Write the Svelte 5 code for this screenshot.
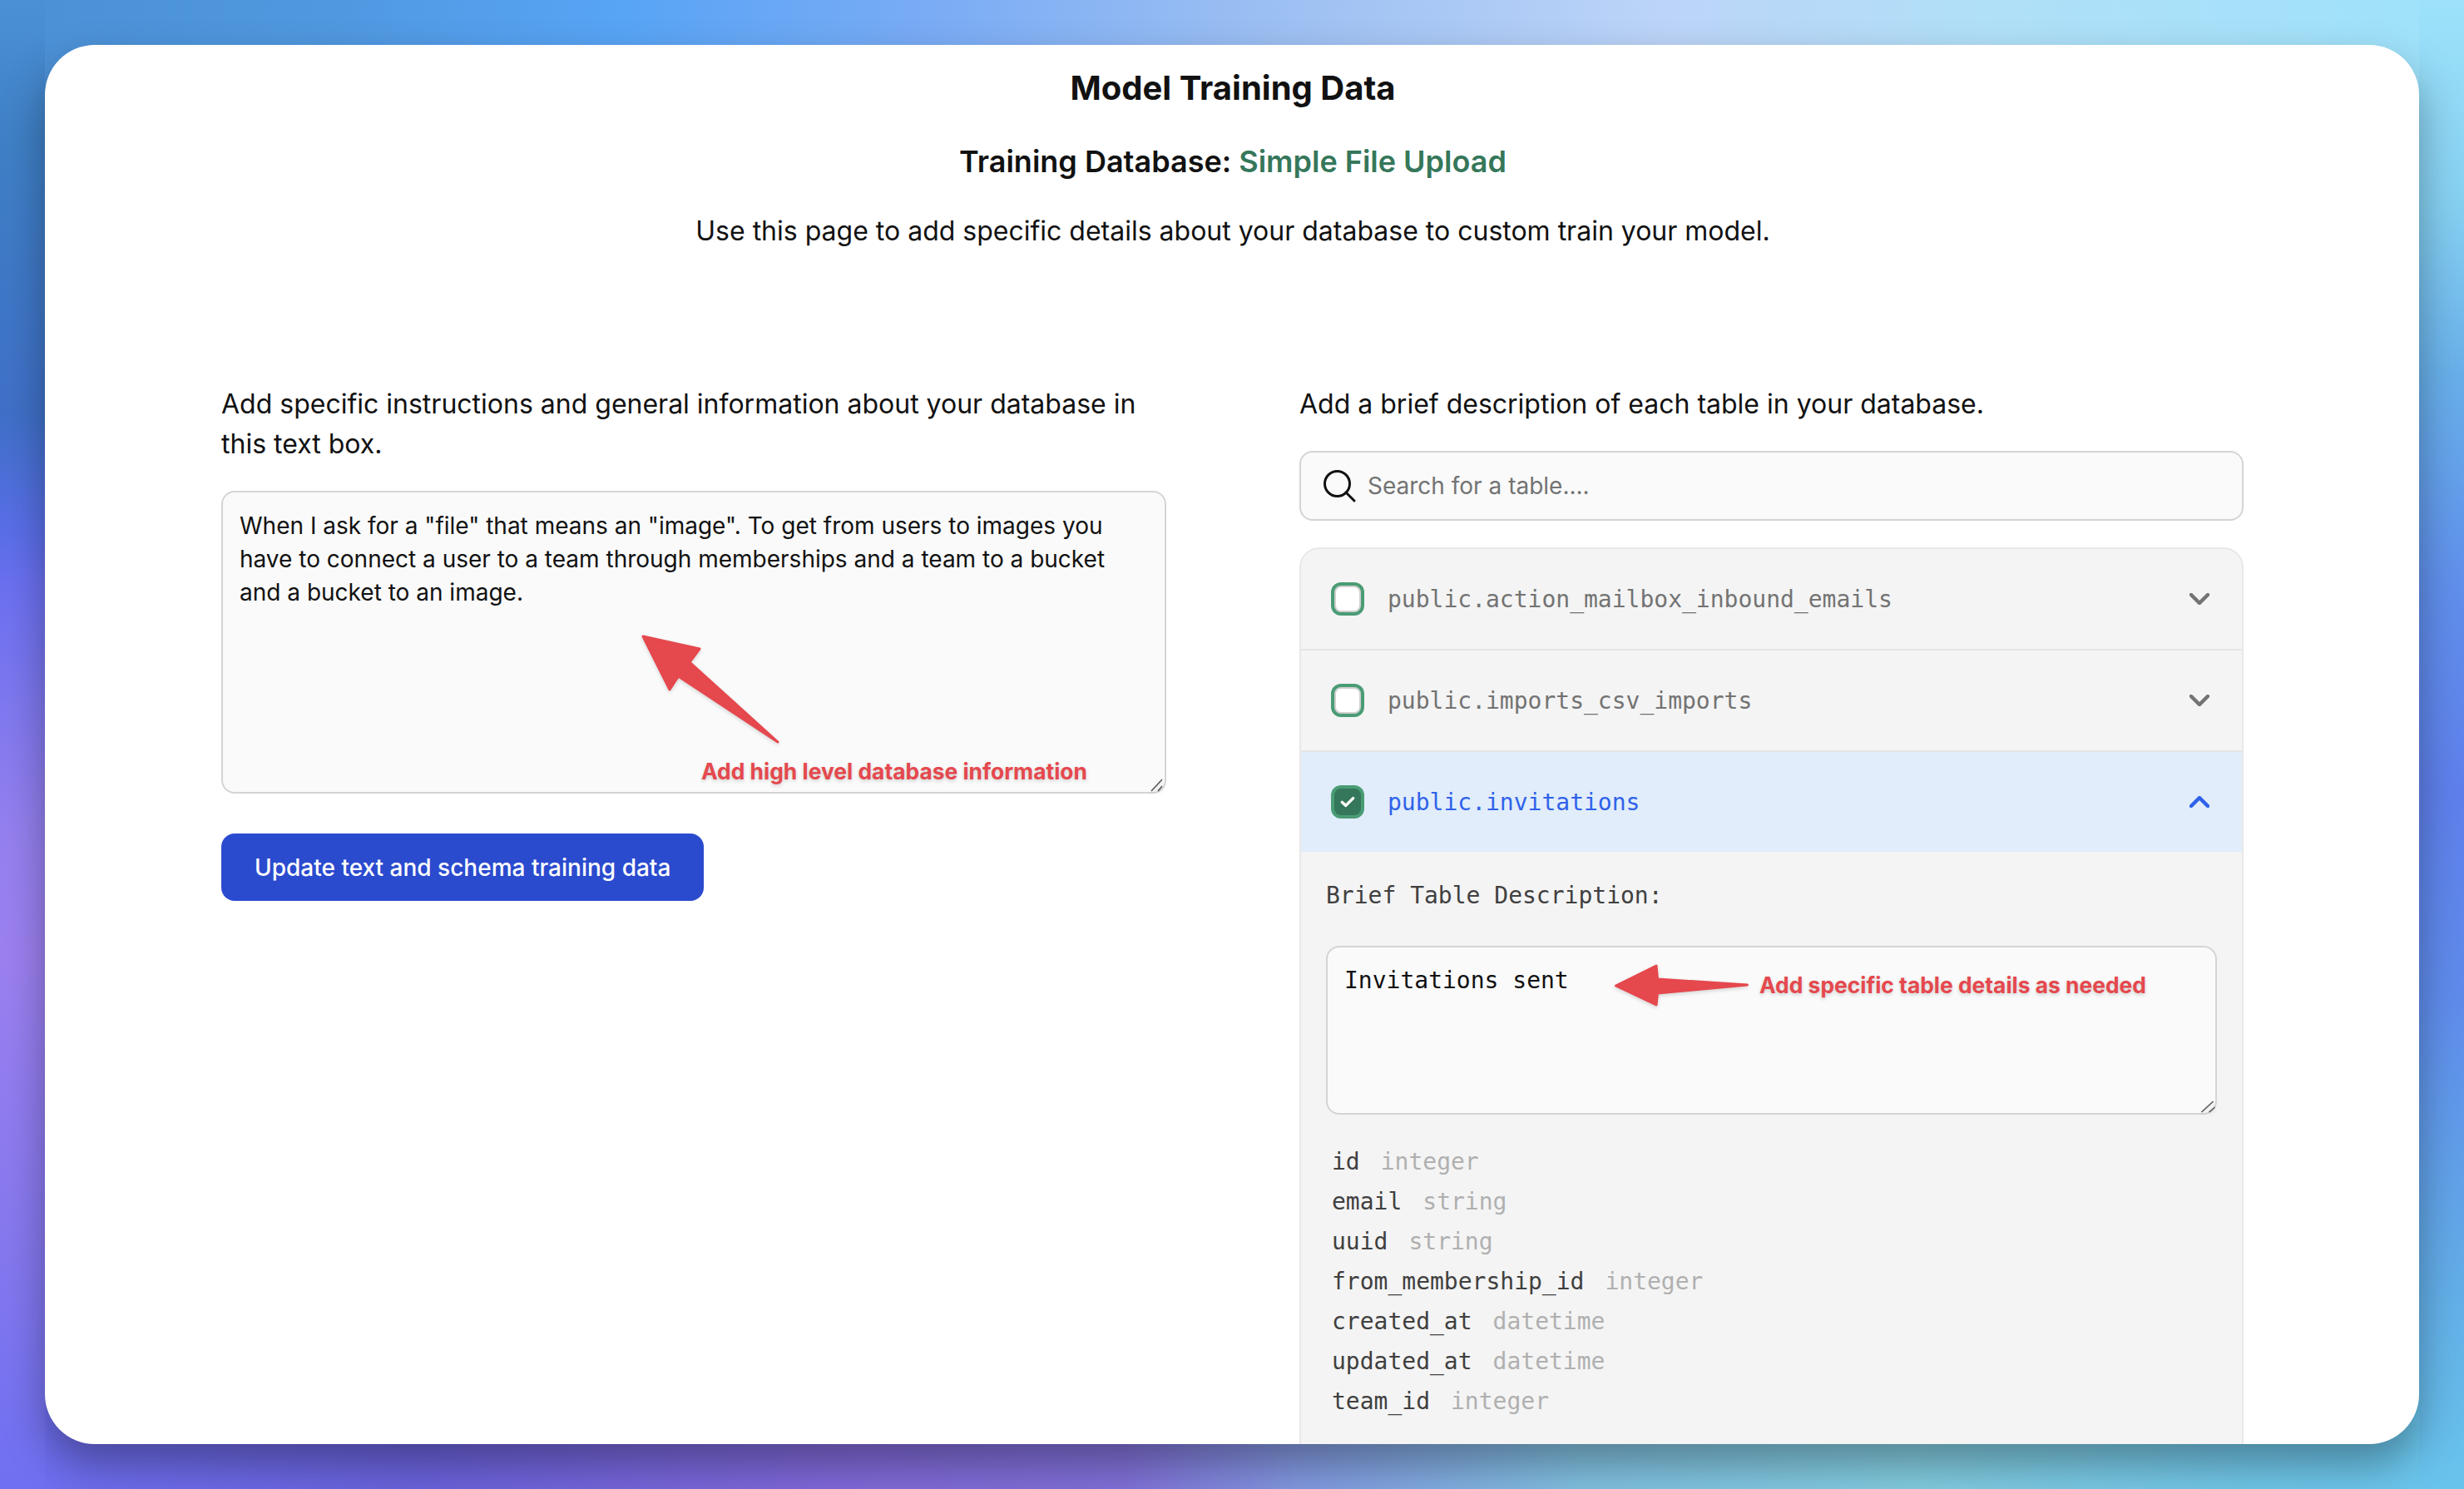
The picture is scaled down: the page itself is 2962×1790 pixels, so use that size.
<script>
  const tables = ['public.action_mailbox_inbound_emails', 'public.imports_csv_imports'];

  const columns = [
    ['id', 'integer'],
    ['email', 'string'],
    ['uuid', 'string'],
    ['from_membership_id', 'integer'],
    ['created_at', 'datetime'],
    ['updated_at', 'datetime'],
    ['team_id', 'integer']
  ];

  const info = 'When I ask for a "file" that means an "image". To get from users to images you have to connect a user to a team through memberships and a team to a bucket and a bucket to an image.';
  const description = 'Invitations sent';
</script>

<div class="page">
  <main class="window">
    <h1>Model Training Data</h1>
    <h2>Training Database: <span class="db">Simple File Upload</span></h2>
    <p class="intro">Use this page to add specific details about your database to custom train your model.</p>

    <div class="columns">
      <section>
        <p class="label">Add specific instructions and general information about your database in this text box.</p>
        <div class="note-wrap high">
          <textarea class="info" value={info}></textarea>
          <svg class="arrow" viewBox="0 0 1136 364" aria-hidden="true">
            <path d="M507 175 L575 190 L563 206 L669 302 L549.5 223 L539 239 Z" />
            <path class="grip" d="M1118 361 L1131 347 M1126 361 L1131 355" />
          </svg>
          <span class="note note-high">Add high level database information</span>
        </div>
        <button class="save">Update text and schema training data</button>
      </section>

      <section>
        <p class="label">Add a brief description of each table in your database.</p>
        <div class="search">
          <svg viewBox="0 0 40 40" width="40" height="40" aria-hidden="true">
            <circle cx="17.5" cy="17.5" r="15" />
            <path d="M28 28 L38 38" />
          </svg>
          <span>Search for a table....</span>
        </div>

        <div class="list">
          {#each tables as table}
            <div class="row">
              <span class="check"></span>
              <span class="name">{table}</span>
              <svg class="chev" viewBox="0 0 24 14" width="24" height="14" aria-hidden="true">
                <path d="M2 2 L12 12 L22 2" />
              </svg>
            </div>
          {/each}
          <div class="row open">
            <span class="check on">
              <svg viewBox="0 0 20 16" width="18" height="14" aria-hidden="true">
                <path d="M2.5 8.5 L7.5 13 L17.5 3" />
              </svg>
            </span>
            <span class="name">public.invitations</span>
            <svg class="chev" viewBox="0 0 24 14" width="24" height="14" aria-hidden="true">
              <path d="M2 12 L12 2 L22 12" />
            </svg>
          </div>
          <div class="detail">
            <p class="brief">Brief Table Description:</p>
            <div class="note-wrap">
              <textarea class="desc" value={description}></textarea>
              <svg class="arrow" viewBox="0 0 1070 203" aria-hidden="true">
                <path d="M348 48 L396.5 24 L398 40 L506 47 L398 57 L396.5 71 Z" />
                <path class="grip" d="M1052 200 L1066 187 M1061 200 L1068 194" />
              </svg>
              <span class="note note-table">Add specific table details as needed</span>
            </div>
            <ul>
              {#each columns as [name, type]}
                <li>{name}<span class="type">{type}</span></li>
              {/each}
            </ul>
          </div>
        </div>
      </section>
    </div>
  </main>
</div>

<style>
  :global(body) {
    margin: 0;
  }

  /* only the 54px band round the window shows, so each side gets its own ramp */
  .page {
    box-sizing: border-box;
    width: 2962px;
    height: 1790px;
    padding: 54px;
    overflow: hidden;
    font-family: Inter, "Liberation Sans", sans-serif;
    color: #111;
    background-repeat: no-repeat;
    background-color: #6a8ee8;
    background-image:
      linear-gradient(180deg, #4b90d5 0, #3f80c6 170px, #3f70c8 500px, #5a6ee8 640px, #6a70f0 700px, #9580ef 1000px, #9c80f0 1150px, #8578ef 1500px, #6f70f2 1790px),
      linear-gradient(180deg, #9de2fa 0, #85d0f2 250px, #68b0ea 450px, #6090ec 700px, #5f80ec 950px, #5f8cec 1200px, #62aae8 1500px, #68c4ec 1790px),
      linear-gradient(90deg, #4b90d5 0, #5098e0 400px, #58a4f5 750px, #78abf5 1100px, #9abef2 1500px, #bcd4f8 2000px, #b0e0f8 2400px, #9de2fa 2962px),
      linear-gradient(90deg, #6f70f2 0, #6a62dc 500px, #8068d8 1000px, #8070d8 1350px, #8298e0 1560px, #80c0e0 1900px, #82cce0 2300px, #70c6e8 2700px, #68c4ec 2962px);
    background-size: 54px 100%, 54px 100%, 100% 114px, 100% 114px;
    background-position: 0 0, 100% 0, 0 0, 0 100%;
  }

  .window {
    height: 1682px;
    overflow: hidden;
    background: #fff;
    border-radius: 60px;
    box-shadow: 0 24px 50px rgba(0, 0, 0, 0.34);
    padding: 24px 210px 0 212px;
    box-sizing: border-box;
  }

  h1 {
    margin: 0;
    font-size: 40px;
    line-height: 56px;
    font-weight: 700;
    text-align: center;
  }

  h2 {
    margin: 32px 0 0;
    font-size: 36px;
    line-height: 56px;
    font-weight: 600;
    text-align: center;
  }

  .db {
    color: #35775a;
  }

  .intro {
    margin: 32px 0 0;
    font-size: 32px;
    line-height: 48px;
    text-align: center;
  }

  .columns {
    display: grid;
    grid-template-columns: 1136px 1135px;
    column-gap: 160px;
    margin-top: 160px;
  }

  .label {
    margin: 0 0 32px;
    font-size: 32px;
    line-height: 48px;
  }

  .note-wrap {
    position: relative;
  }

  textarea {
    display: block;
    box-sizing: border-box;
    width: 100%;
    margin: 0;
    background: #fafafa;
    border: 2px solid #d4d4d4;
    border-radius: 16px;
    color: #111;
    outline: none;
    resize: none;
  }

  .info {
    height: 364px;
    padding: 20px;
    font-family: inherit;
    font-size: 28px;
    line-height: 40px;
  }

  .desc {
    height: 203px;
    padding: 20px;
    font-family: "DejaVu Sans Mono", monospace;
    font-size: 28px;
    line-height: 40px;
  }

  .arrow {
    position: absolute;
    inset: 0;
    width: 100%;
    height: 100%;
    pointer-events: none;
    filter: drop-shadow(0 2px 2px rgba(0, 0, 0, 0.15));
  }

  .arrow path {
    fill: #e5484d;
    stroke: #e5484d;
    stroke-width: 3;
    stroke-linejoin: round;
  }

  .arrow .grip {
    fill: none;
    stroke: #555;
    stroke-width: 1.5;
  }

  .note {
    position: absolute;
    font-family: Inter, "Liberation Sans", sans-serif;
    font-size: 26.4px;
    line-height: 36px;
    font-weight: 700;
    color: #e5484d;
    white-space: nowrap;
    text-shadow: 0 2px 4px rgba(0, 0, 0, 0.18);
  }

  .note-high {
    left: 577px;
    top: 319px;
  }

  .note-table {
    left: 521px;
    top: 29px;
  }

  .save {
    display: block;
    margin-top: 48px;
    height: 81px;
    padding: 0 40px;
    border: none;
    border-radius: 16px;
    background: #2b4bcf;
    color: #fff;
    font-family: inherit;
    font-size: 28px;
    font-weight: 500;
  }

  .search {
    display: flex;
    align-items: center;
    gap: 14px;
    box-sizing: border-box;
    height: 84px;
    padding: 0 26px;
    background: #fafafa;
    border: 2px solid #d4d4d4;
    border-radius: 16px;
    font-size: 28px;
    color: #737373;
  }

  .search svg {
    fill: none;
    stroke: #111;
    stroke-width: 3;
    stroke-linecap: round;
  }

  .list {
    margin-top: 32px;
    background: #f4f4f4;
    border: 2px solid #e8e8e8;
    border-bottom: none;
    border-radius: 24px 24px 0 0;
    font-family: "DejaVu Sans Mono", monospace;
    font-size: 28px;
  }

  .row {
    display: flex;
    align-items: center;
    box-sizing: border-box;
    height: 122px;
    padding: 0 39px 0 40px;
    border-bottom: 2px solid #e5e5e5;
    color: #737373;
  }

  .row.open {
    height: 120px;
    border-bottom: none;
    background: #e1edfa;
    color: #2f62ea;
  }

  .check {
    display: flex;
    align-items: center;
    justify-content: center;
    flex: none;
    box-sizing: border-box;
    width: 32px;
    height: 32px;
    border: 2px solid #d0d0d0;
    border-radius: 8px;
    background: #fff;
    box-shadow: 0 0 0 4px #4a9c74;
  }

  .check.on {
    background: #35775a;
    border-color: #35775a;
  }

  .check.on svg {
    fill: none;
    stroke: #fff;
    stroke-width: 4;
    stroke-linecap: round;
    stroke-linejoin: round;
  }

  .name {
    flex: 1;
    margin-left: 32px;
  }

  .chev {
    fill: none;
    stroke: currentColor;
    stroke-width: 4.5;
    stroke-linecap: round;
    stroke-linejoin: round;
  }

  .detail {
    padding: 33px 30px 80px;
  }

  .brief {
    margin: 0 0 40px;
    line-height: 40px;
    color: #404040;
  }

  ul {
    list-style: none;
    margin: 33px 0 0;
    padding: 0 0 0 7px;
    color: #404040;
  }

  li {
    line-height: 48px;
    white-space: nowrap;
  }

  .type {
    margin-left: 25px;
    color: #b0b0b0;
  }
</style>
